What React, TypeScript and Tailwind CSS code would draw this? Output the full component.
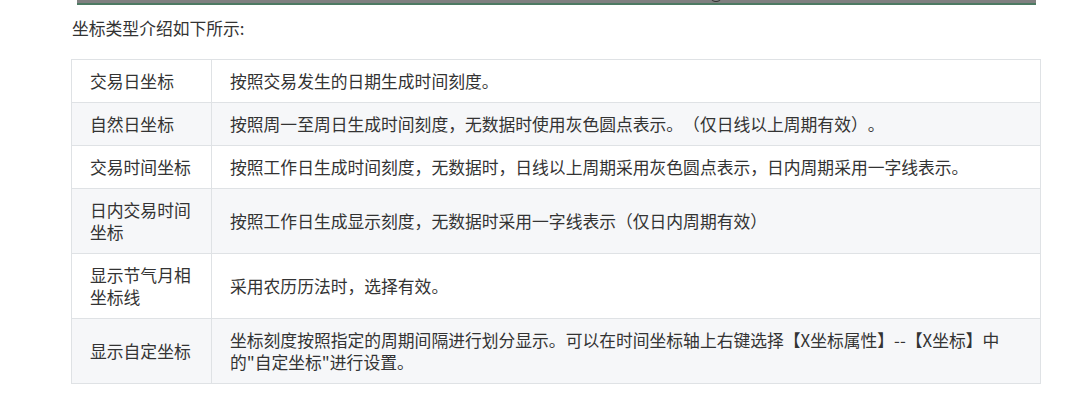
import React from 'react';

const rows: { name: string; desc: string }[] = [
  { name: '交易日坐标', desc: '按照交易发生的日期生成时间刻度。' },
  { name: '自然日坐标', desc: '按照周一至周日生成时间刻度，无数据时使用灰色圆点表示。（仅日线以上周期有效）。' },
  { name: '交易时间坐标', desc: '按照工作日生成时间刻度，无数据时，日线以上周期采用灰色圆点表示，日内周期采用一字线表示。' },
  { name: '日内交易时间坐标', desc: '按照工作日生成显示刻度，无数据时采用一字线表示（仅日内周期有效）' },
  { name: '显示节气月相坐标线', desc: '采用农历历法时，选择有效。' },
  {
    name: '显示自定坐标',
    desc: '坐标刻度按照指定的周期间隔进行划分显示。可以在时间坐标轴上右键选择【X坐标属性】--【X坐标】中的"自定坐标"进行设置。',
  },
];

export default function App() {
  return (
    <div
      className="relative h-[401px] w-[1067px] overflow-hidden bg-white text-[16.8px] text-[#333] [text-spacing-trim:space-all]"
      style={{ fontFamily: '"Microsoft YaHei", "Noto Sans CJK SC", sans-serif' }}
    >
      {/* bottom edge of the screenshot above */}
      <div className="relative ml-[77px] h-[5px] w-[959px] border-b-2 border-[#4d7a63] bg-[#808080]">
        <div className="absolute left-[634px] top-[-6px] h-[8px] w-[10px] rounded-full border border-[#333]" />
      </div>

      <p className="ml-[72px] mt-[12px] leading-[22px]">坐标类型介绍如下所示:</p>

      <table className="ml-[71px] mt-[20px] w-[970px] border-collapse">
        <tbody>
          {rows.map((r, i) => (
            <tr key={r.name} className={i % 2 === 1 ? 'bg-[#f6f7f9]' : 'bg-white'}>
              <td className="w-[140px] border border-[#dfe2e5] py-[10px] pl-[18px] pr-[18px] align-middle leading-[22px]">
                {r.name}
              </td>
              <td className="border border-[#dfe2e5] py-[10px] pl-[18px] pr-[30px] align-middle leading-[22px]">
                {r.desc}
              </td>
            </tr>
          ))}
        </tbody>
      </table>
    </div>
  );
}
